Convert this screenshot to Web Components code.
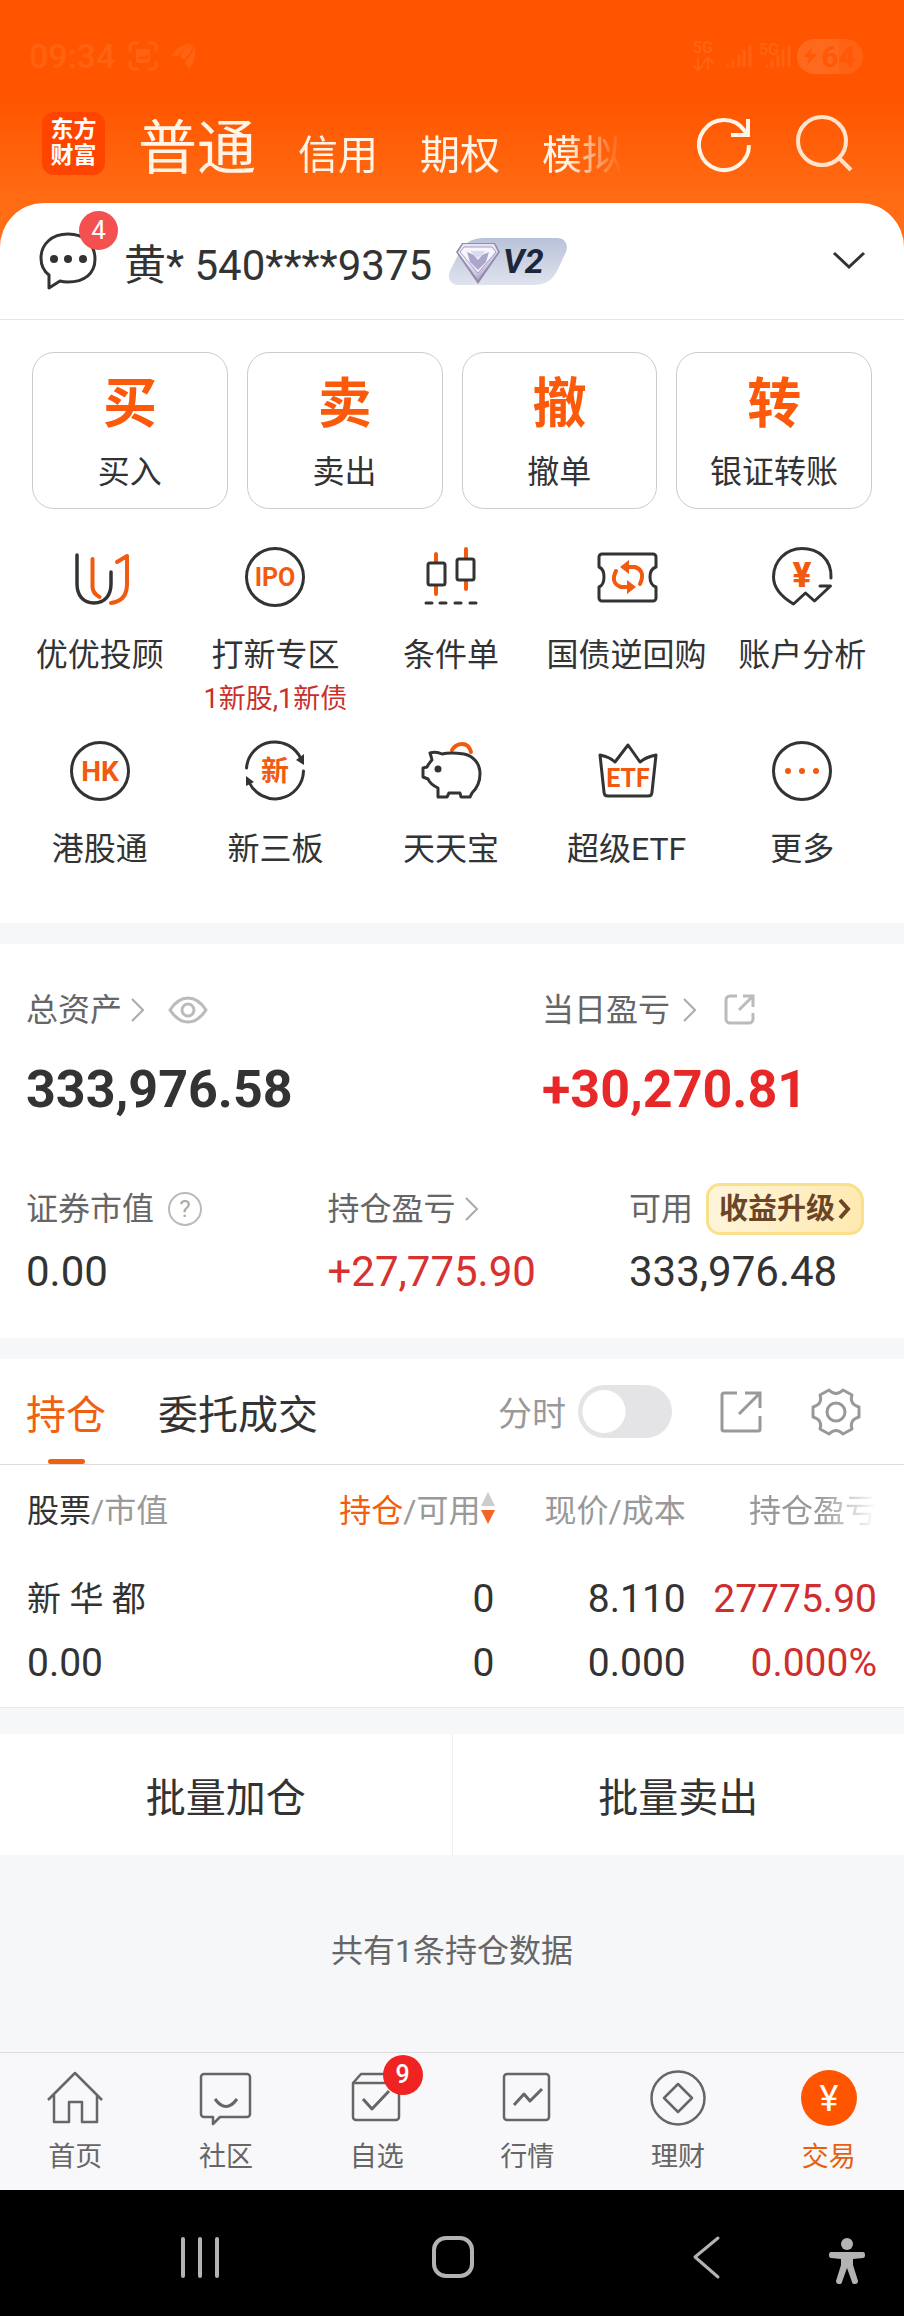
<!DOCTYPE html>
<html lang="zh-CN">
<head>
<meta charset="utf-8">
<meta name="viewport" content="width=device-width, initial-scale=1">
<title>交易</title>
<style>
    body {
        background: #f6f7f9;
        color: #333;
        display: flex;
        flex-direction: column;
        font-family: Roboto, "Noto Sans CJK SC", sans-serif;
        margin: 0;
        min-height: 100vh;
    }

    .top {
        background: linear-gradient(#f50 100px, #ff6a12 190px, #ff701a 250px);
    }

    .tiles {
        background: #fff;
        display: grid;
        gap: 19px;
        grid-template-columns: repeat(4, 1fr);
        padding: 32px 32px 36px;
    }

    .entries {
        background: #fff;
        display: grid;
        grid-template-columns: repeat(5, 1fr);
        margin-bottom: 21px;
        padding: 0 14px 52px 12px;
        row-gap: 22px;
    }

    .notice {
        align-items: center;
        color: #666;
        display: flex;
        flex: 1;
        font-size: 32px;
        justify-content: center;
        margin: 0;
        padding-bottom: 12px;
    }
</style>
</head>
<body>
    <div class="top">
        <status-bar></status-bar>
        <app-header>
            <a href="#normal" aria-current="page">普通</a>
            <a href="#credit">信用</a>
            <a href="#option">期权</a>
            <a href="#demo">模拟</a>
        </app-header>
        <account-bar messages="4" level="V2">黄* 540****9375</account-bar>
    </div>

    <div class="tiles">
        <trade-tile glyph="买">买入</trade-tile>
        <trade-tile glyph="卖">卖出</trade-tile>
        <trade-tile glyph="撤">撤单</trade-tile>
        <trade-tile glyph="转">银证转账</trade-tile>
    </div>

    <div class="entries">
        <quick-entry icon="advisor">优优投顾</quick-entry>
        <quick-entry icon="ipo">打新专区<span slot="note">1新股,1新债</span></quick-entry>
        <quick-entry icon="candles">条件单</quick-entry>
        <quick-entry icon="repo">国债逆回购</quick-entry>
        <quick-entry icon="analysis">账户分析</quick-entry>
        <quick-entry icon="hk">港股通</quick-entry>
        <quick-entry icon="neeq">新三板</quick-entry>
        <quick-entry icon="piggy">天天宝</quick-entry>
        <quick-entry icon="etf">超级ETF</quick-entry>
        <quick-entry icon="more">更多</quick-entry>
    </div>

    <asset-summary></asset-summary>
    <holdings-panel></holdings-panel>
    <batch-actions></batch-actions>
    <p class="notice">共有1条持仓数据</p>

    <tab-bar>
        <tab-item icon="home">首页</tab-item>
        <tab-item icon="community">社区</tab-item>
        <tab-item icon="watchlist" badge="9">自选</tab-item>
        <tab-item icon="market">行情</tab-item>
        <tab-item icon="wealth">理财</tab-item>
        <tab-item icon="trade" active>交易</tab-item>
    </tab-bar>
    <system-nav></system-nav>

<script>
const INK = '#333';
const ORANGE = '#f25a10';

// name: [width, height, markup]
const icons = {
    capture: [30, 30, `
        <g fill="none" stroke="currentColor" stroke-width="3" stroke-linecap="round">
            <path d="M2 9V6a4 4 0 0 1 4-4h3M21 2h3a4 4 0 0 1 4 4v3M28 21v3a4 4 0 0 1-4 4h-3M9 28H6a4 4 0 0 1-4-4v-3"/>
        </g>
        <path fill="currentColor" fill-rule="evenodd" d="M10 8h10a2 2 0 0 1 2 2v10a2 2 0 0 1-2 2H10a2 2 0 0 1-2-2V10a2 2 0 0 1 2-2zm0 10h10v-4l-4 2-2-1-4 2z"/>
    `],
    wing: [26, 28, `
        <path fill="currentColor" d="M1 14C5 6 11 3 20 1 15 6 10 9 7 14zM9 14c3-6 7-10 13-12 0 6-5 12-9 16zM14 20c5-5 8-10 9-17 3 8 1 16-5 24z"/>
    `],
    data: [22, 14, `
        <g fill="none" stroke="currentColor" stroke-width="2"><path d="M6 1v11M1 8l5 5 5-5M16 13V2M11 6l5-5 5 5"/></g>
    `],
    signal: [26, 26, `
        <g stroke="currentColor" stroke-width="3" stroke-linecap="round"><path d="M2 23v0M7 18v5M13 13v10M18 8v15M24 3v20"/></g>
    `],
    refresh: [60, 60, `
        <g fill="none" stroke="#fff4e6" stroke-width="4">
            <path d="M55 31A25 25 0 1 1 50 16L53 20"/>
            <path d="M54 5v16H37"/>
        </g>
    `],
    search: [60, 60, `
        <g fill="none" stroke="#ffe3cc" stroke-width="4"><circle cx="28" cy="27" r="24"/><path d="M45 44L57 56"/></g>
    `],
    message: [60, 60, `
        <path fill="none" stroke="${INK}" stroke-width="3" stroke-linejoin="round" d="M30 3C46 3 57 13 57 28S46 51 30 51q-5 0-8-1L11 57V44Q3 38 3 27C3 13 14 3 30 3z"/>
        <g fill="${INK}"><circle cx="16" cy="28" r="4"/><circle cx="30" cy="28" r="4"/><circle cx="45" cy="28" r="4"/></g>
    `],
    down: [34, 18, `
        <path fill="none" stroke="${INK}" stroke-width="3" d="M2 1l15 14L32 1"/>
    `],
    vip: [120, 48, `
        <defs>
            <linearGradient id="plate" x1="0" y1="0" x2="0" y2="1"><stop offset="0" stop-color="#b9c2d9"/><stop offset="1" stop-color="#dfe3ee"/></linearGradient>
            <linearGradient id="gem" x1="0" y1="0" x2="1" y2="1"><stop offset="0" stop-color="#fff"/><stop offset=".6" stop-color="#cdc8e4"/><stop offset="1" stop-color="#7a7391"/></linearGradient>
        </defs>
        <path fill="url(#plate)" d="M36 1h73c8 0 12 7 9 14l-8 17c-5 11-13 16-24 16H11C2 48-1 41 2 34l9-18C16 6 24 1 36 1z"/>
        <path fill="#938ca8" d="M14 6h33l5 9-22 32L8 15z"/>
        <path fill="#e6e3f4" d="M15 7h31l4 8H10z"/>
        <path fill="url(#gem)" d="M10 15h40L30 43z"/>
        <path fill="#f7f6ff" stroke="#a59fc0" d="M16 10h28l4 5-18 21-18-21z"/>
        <path fill="#aca6ca" d="M19 15l7 3 4 5 4-5 7-3-3 10-8 8-8-8z"/>
        <path fill="#dcd9f2" d="M22 14h16l-8 7z"/>
    `],
    advisor: [64, 64, `
        <g fill="none" stroke-width="4" stroke-linecap="round" stroke-linejoin="round">
            <path stroke="${ORANGE}" d="M24.500 14v28q0 6 7 10"/>
            <path stroke="${INK}" stroke-width="3.500" d="M9 10v29c0 11 6 19 17 19s17-8 17-19V27"/>
            <path stroke="${ORANGE}" d="M49 17l10-6v28q0 17-16 19"/>
        </g>
    `],
    ipo: [64, 64, `
        <circle cx="32" cy="32" r="28.500" fill="none" stroke="${INK}" stroke-width="3"/>
        <text x="32" y="41" font-size="25" font-weight="700" text-anchor="middle" fill="${ORANGE}">IPO</text>
    `],
    candles: [64, 64, `
        <g stroke="${ORANGE}" stroke-width="4" stroke-linecap="round"><path d="M17 9v8M17 41v8M47 4v8M47 36v8"/></g>
        <g fill="none" stroke="${INK}" stroke-width="3"><rect x="9" y="18" width="17" height="22" rx="2"/><rect x="38" y="14" width="17" height="21" rx="2"/></g>
        <g stroke="${INK}" stroke-width="3" stroke-linecap="round"><path d="M7 58h6M21 58h6M36 58h6M51 58h6"/></g>
    `],
    repo: [64, 64, `
        <path fill="none" stroke="${INK}" stroke-width="3" stroke-linejoin="round" d="M7 9h51a3 3 0 0 1 3 3v10q-6 2-6 10t6 10v11a3 3 0 0 1-3 3H7a3 3 0 0 1-3-3V42q5-2 5-10T4 22V12a3 3 0 0 1 3-3z"/>
        <g fill="none" stroke="${ORANGE}" stroke-width="4" stroke-linecap="round"><path d="M21 26Q15 38 26 42H34M45 39Q51 26 40 22H32"/></g>
        <path fill="${ORANGE}" d="M25 22l9-7v14zM41 42l-9 7V35z"/>
    `],
    analysis: [64, 64, `
        <g fill="none" stroke="${INK}" stroke-width="3" stroke-linecap="round" stroke-linejoin="round">
            <path d="M61 33C62 14 48 3.500 32 3.500S3.500 16 3.500 32q0 15 20 27l12-11 9 8 16-15H50"/>
        </g>
        <text x="32" y="42" font-size="35" font-weight="900" text-anchor="middle" fill="${ORANGE}">¥</text>
    `],
    hk: [64, 64, `
        <circle cx="32" cy="32" r="28.500" fill="none" stroke="${INK}" stroke-width="3"/>
        <text x="32" y="42" font-size="28" font-weight="700" text-anchor="middle" fill="${ORANGE}">HK</text>
    `],
    neeq: [64, 64, `
        <g fill="none" stroke="${INK}" stroke-width="3" stroke-linecap="round"><path d="M3.500 29A28.500 28.500 0 0 1 58 20M60.500 32A28.500 28.500 0 0 1 6 43"/></g>
        <path fill="${INK}" d="M61 15v11l-8-5zM3 37l8 6-8 4z"/>
        <text x="32" y="42" font-size="28" font-weight="700" text-anchor="middle" fill="${ORANGE}">新</text>
    `],
    piggy: [64, 64, `
        <path fill="none" stroke="${ORANGE}" stroke-width="4" stroke-linecap="round" d="M33 11q4-6 10-6 7 0 9 8"/>
        <path fill="none" stroke="${INK}" stroke-width="3" stroke-linejoin="round" d="M11 14q6-2 12 1 8-2 22 0c10 2 16 10 16 20 0 9-4 15-8 19l-2 4H42l-1-4H30l-2 4h-9v-9Q11 45 9 40l-5-2V29l4-1q2-4 5-7-1-4-2-7z"/>
        <circle cx="19" cy="30" r="3.500" fill="${INK}"/>
    `],
    etf: [64, 64, `
        <path fill="none" stroke="${INK}" stroke-width="3" stroke-linejoin="round" d="M5 16q10 2 15 7L33 6l12 17q6-5 16-7l-4 37q0 4-4 4H13q-4 0-4-4z"/>
        <text x="33" y="48" font-size="25" font-weight="700" text-anchor="middle" fill="${ORANGE}">ETF</text>
    `],
    more: [64, 64, `
        <circle cx="32" cy="32" r="28.500" fill="none" stroke="${INK}" stroke-width="3"/>
        <g fill="${ORANGE}"><circle cx="18" cy="32" r="3"/><circle cx="32" cy="32" r="3"/><circle cx="46" cy="32" r="3"/></g>
    `],
    next: [16, 26, `
        <path fill="none" stroke="#aaa" stroke-width="2" d="M2 2l11 11L2 24"/>
    `],
    eye: [40, 28, `
        <g fill="none" stroke="#bbb" stroke-width="3"><path d="M2 14Q10 2 20 2t18 12q-8 12-18 12T2 14z"/><circle cx="20" cy="14" r="6"/></g>
    `],
    help: [36, 36, `
        <circle cx="18" cy="18" r="16" fill="none" stroke="#bbb" stroke-width="2"/>
        <text x="18" y="26" font-size="24" text-anchor="middle" fill="#aaa">?</text>
    `],
    shareSmall: [32, 32, `
        <g fill="none" stroke="#bbb" stroke-width="3"><path d="M13 2H6a4 4 0 0 0-4 4v19a4 4 0 0 0 4 4h19a4 4 0 0 0 4-4V19M15 16L28 3M19 2h10v11"/></g>
    `],
    share: [44, 44, `
        <g fill="none" stroke="#999" stroke-width="3"><path d="M18 3H5a2 2 0 0 0-2 2v34a2 2 0 0 0 2 2h34a2 2 0 0 0 2-2V26M20 24L40 4M26 3h15v15"/></g>
    `],
    gear: [50, 50, `
        <g transform="translate(25 25)" fill="none" stroke="#999" stroke-width="3" stroke-linejoin="round">
            <path d="M23 5Q13 8 16 17L7 22Q0 15-7 22L-16 17Q-13 8-23 5V-5Q-13-8-16-17L-7-22Q0-15 7-22L16-17Q13-8 23-5z"/>
            <circle r="9"/>
        </g>
    `],
    sort: [14, 34, `
        <path fill="#ccc" d="M7 1l7 14H0z"/><path fill="#f26522" d="M7 33l7-14H0z"/>
    `],
    home: [60, 60, `
        <g fill="none" stroke="currentColor" stroke-width="2.500" stroke-linejoin="round"><path d="M3 32L30 5l27 27M9 27v27h15V34h13v20h15V27"/></g>
    `],
    community: [60, 60, `
        <g fill="none" stroke="currentColor" stroke-width="2.500" stroke-linejoin="round">
            <path d="M8 6h43a3 3 0 0 1 3 3v37a3 3 0 0 1-3 3H24l-7 7v-7H8a3 3 0 0 1-3-3V9a3 3 0 0 1 3-3z"/>
            <path d="M19 31q11 15 22 0" stroke-width="3"/>
        </g>
    `],
    watchlist: [60, 60, `
        <g fill="none" stroke="currentColor" stroke-width="2.500" stroke-linejoin="round">
            <path d="M6 15h46v34a3 3 0 0 1-3 3H9a3 3 0 0 1-3-3zL14 6h30l8 9"/>
            <path d="M16 31l9 10 17-18" stroke-width="3"/>
        </g>
    `],
    market: [60, 60, `
        <g fill="none" stroke="currentColor" stroke-width="2.500" stroke-linejoin="round">
            <rect x="7" y="6" width="45" height="46" rx="3"/>
            <path d="M17 37l10-11 6 7 12-12" stroke-width="3"/>
        </g>
    `],
    wealth: [60, 60, `
        <g fill="none" stroke="currentColor" stroke-width="2.500" stroke-linejoin="round"><circle cx="30" cy="30" r="26.500"/><path d="M30 16l14 14-14 14-14-14z"/></g>
    `],
    trade: [60, 60, `
        <circle cx="30" cy="30" r="28" fill="#f50"/>
        <text x="30" y="43" font-size="36" text-anchor="middle" fill="#fff">¥</text>
    `],
    recents: [42, 42, `
        <g stroke="#b3b3b3" stroke-width="4" stroke-linecap="round"><path d="M4 3v37M21 3v37M38 3v37"/></g>
    `],
    homeKey: [42, 42, `
        <rect x="2" y="2" width="38" height="38" rx="12" fill="none" stroke="#b3b3b3" stroke-width="4"/>
    `],
    backKey: [42, 42, `
        <path fill="none" stroke="#b3b3b3" stroke-width="3" stroke-linecap="round" stroke-linejoin="round" d="M33 2L10 21l23 20"/>
    `],
    person: [38, 54, `
        <g fill="#b3b3b3"><circle cx="19" cy="14" r="6"/><path d="M3 22h32q2 0 2 3t-2 3l-10 1v6l5 16q0 3-3 3t-3-2l-5-14-5 14q0 2-3 2t-3-3l5-16v-6L3 28q-2 0-2-3t2-3z"/></g>
    `],
};

function define(name, template) {
    customElements.define(name, class extends HTMLElement {
        constructor() {
            super();

            this.renderRoot = this.attachShadow({ mode: 'open' });
        }

        connectedCallback() {
            this.renderRoot.innerHTML = template(this);
        }
    });
}

const resetStyles = `
    a { color: inherit; text-decoration: none; }
    button { background: none; border: 0; color: inherit; cursor: pointer; font: inherit; margin: 0; padding: 0; }
`;

define('ts-icon', (el) => {
    const [width, height, markup] = icons[el.getAttribute('name')];

    return `
        <style>
            :host { display: block; flex: none; width: ${width}px; height: ${height}px; }
            svg { display: block; overflow: visible; }
        </style>
        <svg width="${width}" height="${height}" viewBox="0 0 ${width} ${height}" aria-hidden="true">${markup}</svg>
    `;
});

define('status-bar', () => `
    <style>
        :host {
            align-items: center;
            box-sizing: border-box;
            color: #ff6311;
            display: flex;
            gap: 13px;
            height: 84px;
            padding: 28px 41px 0 29px;
        }
        time { font-size: 34px; font-weight: 500; }
        .right { align-items: center; display: flex; gap: 12px; margin-left: auto; }
        .net { display: grid; font-size: 16px; font-weight: 700; gap: 2px; justify-items: center; line-height: 14px; }
        .sim { display: flex; margin-left: -5px; }
        .sim span { font-size: 16px; font-weight: 700; line-height: 14px; margin-right: -14px; }
        .battery {
            align-items: center;
            background: linear-gradient(90deg, #ff691d 64%, #ff6212 64%);
            border-radius: 18px;
            color: #ff5908;
            display: flex;
            font-size: 30px;
            font-weight: 700;
            gap: 4px;
            height: 35px;
            justify-content: center;
            margin-left: -6px;
            width: 66px;
        }
    </style>
    <time>09:34</time>
    <ts-icon name="capture"></ts-icon>
    <ts-icon name="wing"></ts-icon>
    <div class="right">
        <div class="net">5G<ts-icon name="data"></ts-icon></div>
        <ts-icon name="signal"></ts-icon>
        <div class="sim"><span>5G</span><ts-icon name="signal"></ts-icon></div>
        <div class="battery">
            <svg width="13" height="18" viewBox="0 0 13 18" aria-hidden="true"><path fill="currentColor" d="M8 0L0 10h5l-2 8L13 7H7z"/></svg>
            <span>64</span>
        </div>
    </div>
`);

define('app-header', () => `
    <style>
        ${resetStyles}
        :host { align-items: center; display: flex; height: 119px; padding: 0 50px 0 42px; }
        .logo {
            background: #ff4400;
            border-radius: 12px;
            box-sizing: border-box;
            color: #fff;
            font-size: 23px;
            font-weight: 700;
            height: 63px;
            line-height: 26px;
            padding-top: 5px;
            text-align: center;
            width: 63px;
        }
        nav {
            align-items: baseline;
            display: flex;
            flex: 1;
            gap: 42px;
            margin: 0 72px 0 33px;
            mask-image: linear-gradient(90deg, #000 calc(100% - 56px), transparent);
            overflow: hidden;
            white-space: nowrap;
        }
        ::slotted(a) { color: #fff4e6; font-size: 40px; text-decoration: none; }
        ::slotted([aria-current]) { font-size: 59px; }
        .actions { display: flex; gap: 40px; }
    </style>
    <a class="logo" href="#home">东方<br>财富</a>
    <nav><slot></slot></nav>
    <div class="actions">
        <button aria-label="刷新"><ts-icon name="refresh"></ts-icon></button>
        <button aria-label="搜索"><ts-icon name="search"></ts-icon></button>
    </div>
`);

define('account-bar', (el) => `
    <style>
        ${resetStyles}
        :host {
            align-items: center;
            background: #fff;
            border-bottom: 1px solid #e5e5e8;
            border-radius: 44px 44px 0 0;
            display: flex;
            height: 116px;
            padding: 0 38px;
        }
        .messages { margin-right: 26px; position: relative; }
        .badge {
            background: #f55050;
            border-radius: 50%;
            color: #fff;
            font-size: 26px;
            height: 39px;
            left: 41px;
            line-height: 39px;
            position: absolute;
            top: -20px;
            width: 39px;
        }
        .account { font-size: 42px; }
        .level { display: grid; margin-left: 16px; place-items: center start; }
        .level > * { grid-area: 1 / 1; }
        .level span { color: #20263a; font-size: 34px; font-style: italic; font-weight: 700; padding-left: 55px; z-index: 1; }
        .toggle { margin-left: auto; }
    </style>
    <button class="messages" aria-label="消息"><ts-icon name="message"></ts-icon><span class="badge">${el.getAttribute('messages')}</span></button>
    <span class="account"><slot></slot></span>
    <div class="level"><ts-icon name="vip"></ts-icon><span>${el.getAttribute('level')}</span></div>
    <button class="toggle" aria-label="切换账户"><ts-icon name="down"></ts-icon></button>
`);

define('trade-tile', (el) => `
    <style>
        ${resetStyles}
        :host { display: block; }
        button {
            border: 1px solid #ccc;
            border-radius: 22px;
            display: block;
            font-size: 32px;
            line-height: 44px;
            padding: 20px 0 14px;
            width: 100%;
        }
        strong { color: #fa5a0a; display: block; font-size: 54px; line-height: 64px; margin-bottom: 13px; }
    </style>
    <button><strong>${el.getAttribute('glyph')}</strong><slot></slot></button>
`);

define('quick-entry', (el) => `
    <style>
        ${resetStyles}
        :host { display: block; text-align: center; }
        a { align-items: center; display: flex; flex-direction: column; font-size: 32px; line-height: 44px; white-space: nowrap; }
        ts-icon { margin-bottom: 24px; }
        ::slotted([slot=note]) { color: #c9302c; display: block; font-size: 27px; line-height: 36px; margin-top: 4px; }
    </style>
    <a href="#${el.getAttribute('icon')}"><ts-icon name="${el.getAttribute('icon')}"></ts-icon><span><slot></slot></span><slot name="note"></slot></a>
`);

define('asset-summary', () => `
    <style>
        ${resetStyles}
        :host { background: #fff; display: block; margin-bottom: 21px; padding: 44px 29px 40px 26px; }
        dl { display: grid; margin: 0; }
        .totals { grid-template-columns: 1fr 333px; margin-bottom: 63px; }
        .details { grid-template-columns: 1fr 1fr 246px; }
        dt { align-items: center; color: #666; display: flex; font-size: 32px; gap: 8px; line-height: 44px; white-space: nowrap; }
        dd { font-size: 42px; line-height: 52px; margin: 11px 0 0; }
        .totals dd { font-size: 52px; font-weight: 700; line-height: 60px; margin-top: 28px; }
        .details dt { height: 52px; }
        .totals button { margin-left: 14px; }
        .details button, .upgrade { margin-left: 5px; }
        .loose { gap: 12px; }
        .up { color: #d93030; }
        .totals .up { color: #e62828; }
        .upgrade {
            align-items: center;
            background: linear-gradient(100deg, #fff5dc, #ffe9b0);
            border: 3px solid #f9e08a;
            border-radius: 14px 18px 14px 14px;
            box-sizing: border-box;
            color: #6b4526;
            display: flex;
            font-size: 29px;
            font-weight: 700;
            gap: 3px;
            height: 52px;
            padding: 0 10px;
        }
    </style>
    <dl class="totals">
        <div>
            <dt>总资产<ts-icon name="next"></ts-icon><button aria-label="隐藏金额"><ts-icon name="eye"></ts-icon></button></dt>
            <dd>333,976.58</dd>
        </div>
        <div>
            <dt class="loose">当日盈亏<ts-icon name="next"></ts-icon><button aria-label="分享"><ts-icon name="shareSmall"></ts-icon></button></dt>
            <dd class="up">+30,270.81</dd>
        </div>
    </dl>
    <dl class="details">
        <div>
            <dt>证券市值<button aria-label="说明"><ts-icon name="help"></ts-icon></button></dt>
            <dd>0.00</dd>
        </div>
        <div>
            <dt>持仓盈亏<ts-icon name="next"></ts-icon></dt>
            <dd class="up">+27,775.90</dd>
        </div>
        <div>
            <dt>可用<a class="upgrade" href="#upgrade">收益升级<svg width="13" height="24" viewBox="0 0 13 24" aria-hidden="true"><path fill="none" stroke="currentColor" stroke-width="4" d="M2 3l8 9-8 9"/></svg></a></dt>
            <dd>333,976.48</dd>
        </div>
    </dl>
`);

define('holdings-panel', () => `
    <style>
        ${resetStyles}
        :host { background: #fff; border-bottom: 1px solid #e8e8ea; display: block; margin-bottom: 26px; }
        header { align-items: stretch; border-bottom: 1px solid #ddd; display: flex; height: 105px; padding: 0 43px 0 26px; }
        .tabs { display: flex; gap: 52px; }
        [role=tab] { font-size: 40px; position: relative; }
        [aria-selected=true] { color: #f0600f; }
        [aria-selected=true]::after {
            background: #f0600f;
            border-radius: 3px;
            bottom: 0;
            content: "";
            height: 5px;
            left: calc(50% - 18px);
            position: absolute;
            width: 37px;
        }
        .tools { align-items: center; color: #999; display: flex; font-size: 34px; margin-left: auto; }
        label { align-items: center; display: flex; gap: 12px; margin-right: 47px; }
        input {
            appearance: none;
            background: radial-gradient(circle at 26px 50%, #fff 21px, transparent 22px), #e4e4e6;
            border-radius: 27px;
            height: 53px;
            margin: 0;
            width: 94px;
        }
        input:checked { background: radial-gradient(circle at 68px 50%, #fff 21px, transparent 22px), #f0600f; }
        .gear { margin-left: 48px; }
        table { border-collapse: collapse; margin: 0 27px; table-layout: fixed; width: calc(100% - 54px); }
        th, td { padding: 0; text-align: right; white-space: nowrap; width: 22.5%; }
        th { color: #999; font-size: 32px; font-weight: 400; height: 86px; }
        th:first-child, td:first-child { text-align: left; width: 32.5%; }
        th b { color: #333; font-weight: 400; }
        th button { align-items: center; display: flex; margin-left: auto; }
        th button b { color: #f0600f; }
        th:last-child { mask-image: linear-gradient(90deg, #000 70%, transparent 100%); }
        td { font-size: 39px; padding: 16px 0 12px; }
        td span { display: block; line-height: 64px; }
        .name { font-size: 34px; }
        .up { color: #cf2e2e; }
    </style>
    <header>
        <div class="tabs" role="tablist">
            <button role="tab" aria-selected="true">持仓</button>
            <button role="tab" aria-selected="false">委托成交</button>
        </div>
        <div class="tools">
            <label>分时<input type="checkbox" role="switch"></label>
            <button aria-label="分享"><ts-icon name="share"></ts-icon></button>
            <button class="gear" aria-label="设置"><ts-icon name="gear"></ts-icon></button>
        </div>
    </header>
    <table>
        <thead>
            <tr>
                <th><b>股票</b>/市值</th>
                <th><button><b>持仓</b>/可用<ts-icon name="sort"></ts-icon></button></th>
                <th>现价/成本</th>
                <th>持仓盈亏</th>
            </tr>
        </thead>
        <tbody>
            <tr>
                <td><span class="name">新 华 都</span><span>0.00</span></td>
                <td><span>0</span><span>0</span></td>
                <td><span>8.110</span><span>0.000</span></td>
                <td class="up"><span>27775.90</span><span>0.000%</span></td>
            </tr>
        </tbody>
    </table>
`);

define('batch-actions', () => `
    <style>
        ${resetStyles}
        :host { background: #fff; display: flex; }
        button { flex: 1; font-size: 40px; height: 121px; }
        button + button { border-left: 1px solid #eee; }
    </style>
    <button>批量加仓</button>
    <button>批量卖出</button>
`);

define('tab-bar', () => `
    <style>
        :host { background: #f8f8fa; border-top: 1px solid #ddd; display: block; }
        nav { display: grid; grid-template-columns: repeat(6, 1fr); }
    </style>
    <nav><slot></slot></nav>
`);

define('tab-item', (el) => `
    <style>
        ${resetStyles}
        :host { color: #666; display: block; }
        :host([active]) { color: #e8600f; }
        a {
            align-items: center;
            display: flex;
            flex-direction: column;
            font-size: 27px;
            gap: 11px;
            line-height: 36px;
            padding: 15px 0;
        }
        .icon { position: relative; }
        .badge {
            background: #f02323;
            border-radius: 50%;
            color: #fff;
            font-size: 25px;
            font-weight: 500;
            height: 40px;
            left: 36px;
            line-height: 40px;
            position: absolute;
            text-align: center;
            top: -13px;
            width: 40px;
        }
    </style>
    <a href="#${el.getAttribute('icon')}">
        <span class="icon">
            <ts-icon name="${el.getAttribute('icon')}"></ts-icon>
            ${el.hasAttribute('badge') ? `<span class="badge">${el.getAttribute('badge')}</span>` : ''}
        </span>
        <slot></slot>
    </a>
`);

define('system-nav', () => `
    <style>
        ${resetStyles}
        :host { align-items: center; background: #000; box-sizing: border-box; display: flex; height: 126px; padding: 8px 38px 0 179px; }
        .keys { display: flex; flex: 1; justify-content: space-between; margin-right: 101px; }
    </style>
    <div class="keys">
        <button aria-label="最近任务"><ts-icon name="recents"></ts-icon></button>
        <button aria-label="主屏幕"><ts-icon name="homeKey"></ts-icon></button>
        <button aria-label="返回"><ts-icon name="backKey"></ts-icon></button>
    </div>
    <button aria-label="无障碍"><ts-icon name="person"></ts-icon></button>
`);
</script>
</body>
</html>
